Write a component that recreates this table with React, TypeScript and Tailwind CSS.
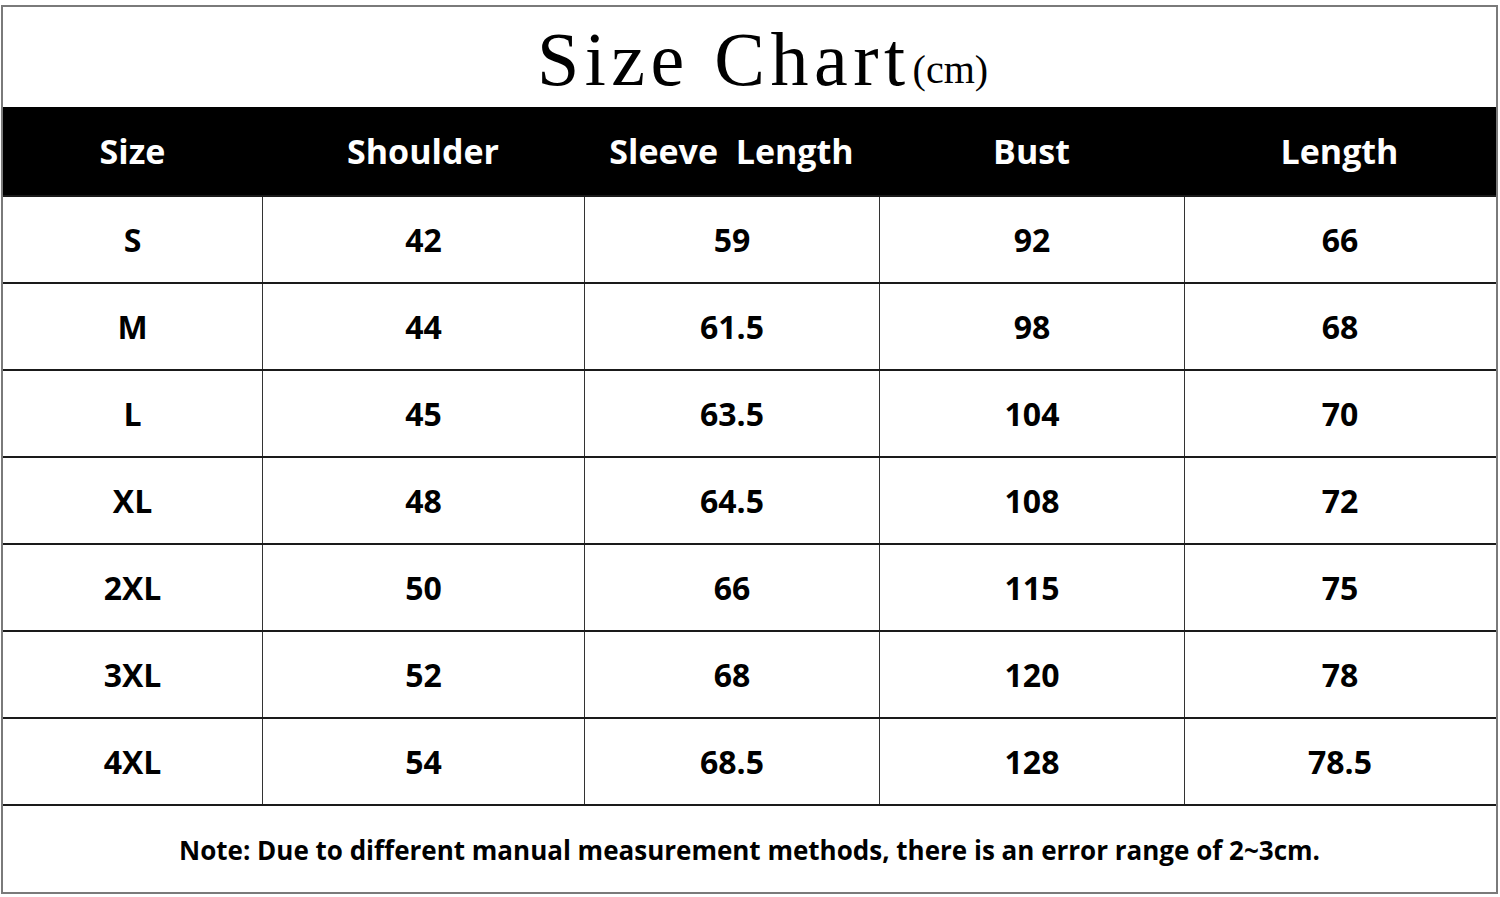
const headers = ["Size", "Shoulder", "Sleeve\u00a0\u00a0Length", "Bust", "Length"];

const rows = [
  ["S", "42", "59", "92", "66"],
  ["M", "44", "61.5", "98", "68"],
  ["L", "45", "63.5", "104", "70"],
  ["XL", "48", "64.5", "108", "72"],
  ["2XL", "50", "66", "115", "75"],
  ["3XL", "52", "68", "120", "78"],
  ["4XL", "54", "68.5", "128", "78.5"],
];

const cols = "grid grid-cols-[259px_322px_295px_305px_311px]";

const App = () => {
  return (
    <div className="min-h-screen w-[1500px] bg-white pt-[5px] pl-[1px]">
      <div className="w-[1497px] border-2 border-[#7a7a7a] font-['Open_Sans',sans-serif] text-black">
        {/* title */}
        <div className="h-[100px] flex items-center justify-center pl-[26px]">
          <span className="font-['Liberation_Serif',serif] text-[76px] tracking-[5.5px] leading-none mt-[4px]">Size Chart</span>
          <span className="font-['Liberation_Serif',serif] text-[40px] leading-none mt-[26px] ml-[2px]">(cm)</span>
        </div>

        {/* header */}
        <div className={`${cols} h-[88px] bg-black text-white`}>
          {headers.map((h) => (
            <div key={h} className="flex items-center justify-center text-[34px] font-bold">
              {h}
            </div>
          ))}
        </div>

        {/* rows */}
        {rows.map((r) => (
          <div key={r[0]} className={`${cols} h-[87px] border-t-2 border-[#1a1a1a]`}>
            {r.map((v, i) => (
              <div
                key={i}
                className={`flex items-center justify-center text-[32px] font-bold ${i > 0 ? "border-l border-[#333]" : ""}`}
              >
                {v}
              </div>
            ))}
          </div>
        ))}

        {/* note */}
        <div className="h-[88px] border-t-2 border-[#1a1a1a] flex items-center justify-center text-[26px] font-bold pt-[2px]">
          Note: Due to different manual measurement methods, there is an error range of 2~3cm.
        </div>
      </div>
    </div>
  );
};

export default App;
